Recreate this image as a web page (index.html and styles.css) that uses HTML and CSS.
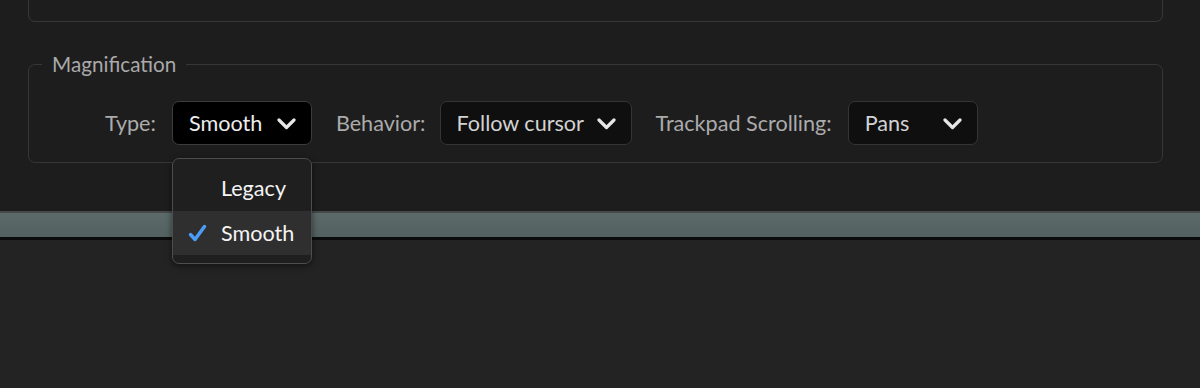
FILE: index.html
```html
<!DOCTYPE html>
<html lang="en">

<head>
    <meta charset="UTF-8">
    <meta name="viewport" content="width=device-width, initial-scale=1.0">
    <title>Preferences</title>
    <link rel="stylesheet" href="styles.css">
</head>

<body>
    <div class="prefs">
        <div class="group-prev"></div>

        <fieldset class="group">
            <legend>Magnification</legend>
            <div class="row">
                <label class="field-label">Type:</label>
                <div class="select select-type is-open">
                    <span class="select-value">Smooth</span>
                    <svg class="chevron" width="19" height="12" viewBox="0 0 19 12"><path d="M2 2l7.5 7.5L17 2" fill="none" stroke="#e6e6e6" stroke-width="3.2" stroke-linecap="round" stroke-linejoin="round"/></svg>
                    <ul class="menu">
                        <li class="menu-item">Legacy</li>
                        <li class="menu-item selected">
                            <svg class="check" width="19" height="19" viewBox="0 0 19 19"><path d="M2.5 10.5l4.5 5L16.5 2.5" fill="none" stroke="#4b9cf5" stroke-width="3.5" stroke-linecap="round" stroke-linejoin="round"/></svg>
                            Smooth
                        </li>
                    </ul>
                </div>

                <label class="field-label gap-left tight">Behavior:</label>
                <div class="select select-behavior">
                    <span class="select-value">Follow cursor</span>
                    <svg class="chevron" width="19" height="12" viewBox="0 0 19 12"><path d="M2 2l7.5 7.5L17 2" fill="none" stroke="#e6e6e6" stroke-width="3.2" stroke-linecap="round" stroke-linejoin="round"/></svg>
                </div>

                <label class="field-label gap-left">Trackpad Scrolling:</label>
                <div class="select select-scroll">
                    <span class="select-value">Pans</span>
                    <svg class="chevron" width="19" height="12" viewBox="0 0 19 12"><path d="M2 2l7.5 7.5L17 2" fill="none" stroke="#e6e6e6" stroke-width="3.2" stroke-linecap="round" stroke-linejoin="round"/></svg>
                </div>
            </div>
        </fieldset>
    </div>

    <div class="splitter"></div>
    <div class="lower"></div>
</body>

</html>
```

FILE: styles.css
```css
* {
    padding: 0;
    margin: 0;
    list-style: none;
    box-sizing: border-box;
}

body {
    background: #232323;
    font-family: "Lato", "Open Sans", sans-serif;
    height: 388px;
    overflow: hidden;
}

/*上半部分设置面板*/
.prefs {
    background: #1e1d1e;
    height: 211px;
    padding: 0 37px 0 28px;
}

.group-prev {
    height: 22px;
    border: 1px solid #363636;
    border-top: none;
    border-radius: 0 0 7px 7px;
}

.group {
    margin-top: 30px;
    border: 1px solid #363636;
    border-radius: 7px;
    padding: 0 0 17px 13px;
    min-width: 0;
}

.group legend {
    padding: 0 10px;
    font-size: 20.7px;
    line-height: 24px;
    color: #a9a9a9;
}

.row {
    display: flex;
    align-items: center;
    margin-top: 25px;
    padding-left: 63px;
}

.field-label {
    font-size: 21.6px;
    color: #ababab;
    margin-right: 16px;
}

.gap-left {
    margin-left: 24px;
}

.field-label.tight {
    margin-right: 14px;
}

/*下拉框*/
.select {
    position: relative;
    display: flex;
    align-items: center;
    justify-content: space-between;
    height: 44px;
    padding: 0 15px 0 16px;
    background: #0f0f0f;
    border: 1px solid #353535;
    border-radius: 7px;
    font-size: 21.6px;
    color: #d2d2d2;
}

.select-type {
    width: 140px;
    background: #000;
    color: #ececec;
    border-color: #3c3c3c;
}

.select-behavior {
    width: 192px;
}

.select-scroll {
    width: 130px;
}

.chevron {
    display: block;
    margin-top: 1px;
    flex-shrink: 0;
}

/*展开的菜单*/
.menu {
    position: absolute;
    left: -1px;
    top: 56px;
    width: 140px;
    background: #1f1f1f;
    border: 1px solid #4d4d4d;
    border-radius: 7px;
    padding: 7px 0 8px;
    box-shadow: 0 2px 6px rgba(0, 0, 0, 0.5);
    overflow: hidden;
}

.menu-item {
    position: relative;
    height: 45px;
    line-height: 45px;
    padding-left: 48px;
    font-size: 21.6px;
    color: #f4f4f4;
}

.menu-item.selected {
    background: #2f2f2f;
    height: 44px;
    line-height: 44px;
}

.check {
    position: absolute;
    left: 15px;
    top: 13px;
}

/*分隔条*/
.splitter {
    height: 29px;
    border-top: 2px solid #474848;
    border-bottom: 3px solid #0b0b0b;
    background: linear-gradient(#5c6a6a, #526060);
}

.lower {
    height: 148px;
    background: #232323;
}
```
